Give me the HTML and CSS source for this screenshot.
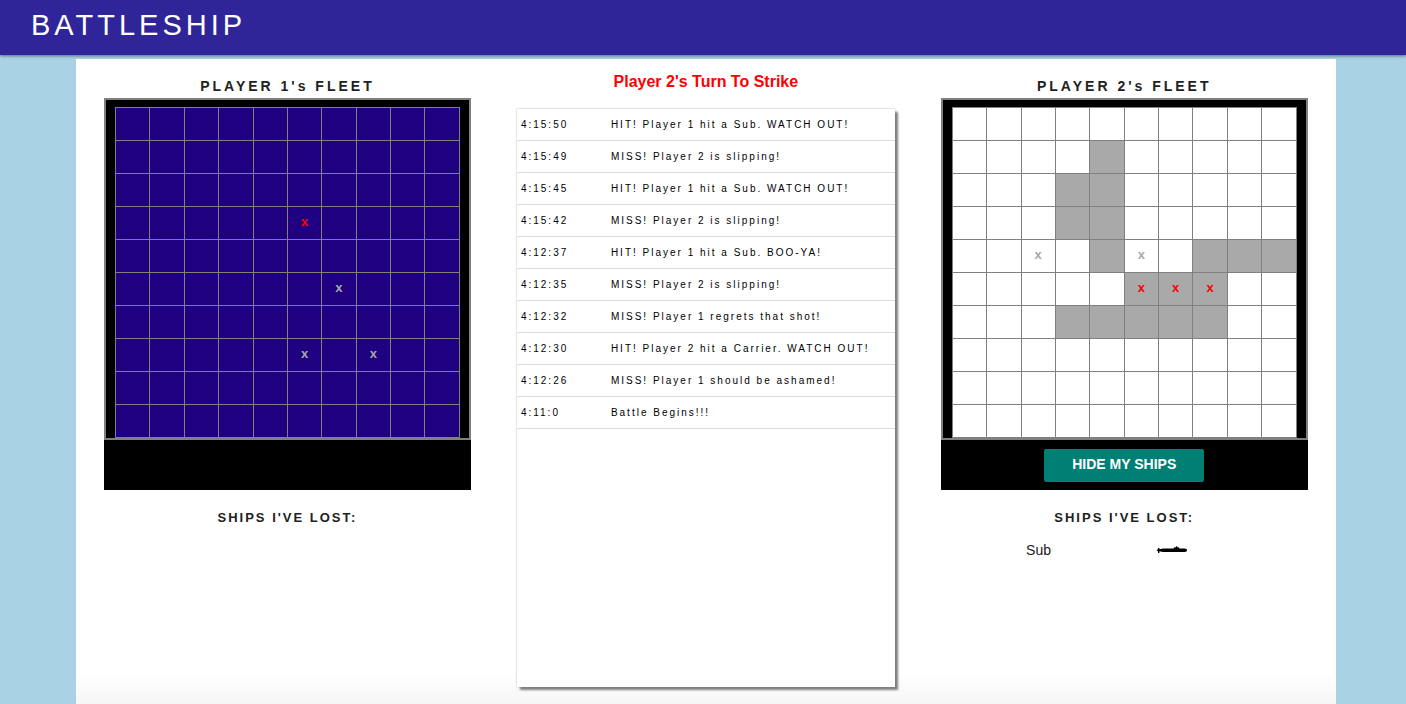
FILE: index.html
```html
<!DOCTYPE html>
<html lang="en">
<head>
<meta charset="utf-8">
<title>Battleship</title>
<link rel="stylesheet" href="styles.css">
</head>
<body>
<header class="nav"><h1 class="logo">BATTLESHIP</h1></header>
<main class="game">
  <section class="player">
    <h2 class="heading">PLAYER 1's FLEET</h2>
    <div class="board">
      <table class="grid hidden-fleet" aria-label="Player 1 board">
        <tr><td></td><td></td><td></td><td></td><td></td><td></td><td></td><td></td><td></td><td></td></tr>
        <tr><td></td><td></td><td></td><td></td><td></td><td></td><td></td><td></td><td></td><td></td></tr>
        <tr><td></td><td></td><td></td><td></td><td></td><td></td><td></td><td></td><td></td><td></td></tr>
        <tr><td></td><td></td><td></td><td></td><td></td><td class="hit">x</td><td></td><td></td><td></td><td></td></tr>
        <tr><td></td><td></td><td></td><td></td><td></td><td></td><td></td><td></td><td></td><td></td></tr>
        <tr><td></td><td></td><td></td><td></td><td></td><td></td><td class="miss">x</td><td></td><td></td><td></td></tr>
        <tr><td></td><td></td><td></td><td></td><td></td><td></td><td></td><td></td><td></td><td></td></tr>
        <tr><td></td><td></td><td></td><td></td><td></td><td class="miss">x</td><td></td><td class="miss">x</td><td></td><td></td></tr>
        <tr><td></td><td></td><td></td><td></td><td></td><td></td><td></td><td></td><td></td><td></td></tr>
        <tr><td></td><td></td><td></td><td></td><td></td><td></td><td></td><td></td><td></td><td></td></tr>
      </table>
    </div>
    <div class="controls"></div>
    <h3 class="heading lost-heading">SHIPS I'VE LOST:</h3>
  </section>

  <section class="center">
    <p class="turn">Player 2's Turn To Strike</p>
    <div class="log">
      <table class="log-table" aria-label="Battle log">
        <tr><td class="time">4:15:50</td><td>HIT! Player 1 hit a Sub. WATCH OUT!</td></tr>
        <tr><td class="time">4:15:49</td><td>MISS! Player 2 is slipping!</td></tr>
        <tr><td class="time">4:15:45</td><td>HIT! Player 1 hit a Sub. WATCH OUT!</td></tr>
        <tr><td class="time">4:15:42</td><td>MISS! Player 2 is slipping!</td></tr>
        <tr><td class="time">4:12:37</td><td>HIT! Player 1 hit a Sub. BOO-YA!</td></tr>
        <tr><td class="time">4:12:35</td><td>MISS! Player 2 is slipping!</td></tr>
        <tr><td class="time">4:12:32</td><td>MISS! Player 1 regrets that shot!</td></tr>
        <tr><td class="time">4:12:30</td><td>HIT! Player 2 hit a Carrier. WATCH OUT!</td></tr>
        <tr><td class="time">4:12:26</td><td>MISS! Player 1 should be ashamed!</td></tr>
        <tr><td class="time">4:11:0</td><td>Battle Begins!!!</td></tr>
      </table>
    </div>
  </section>

  <section class="player">
    <h2 class="heading">PLAYER 2's FLEET</h2>
    <div class="board">
      <table class="grid" aria-label="Player 2 board">
        <tr><td></td><td></td><td></td><td></td><td></td><td></td><td></td><td></td><td></td><td></td></tr>
        <tr><td></td><td></td><td></td><td></td><td class="ship"></td><td></td><td></td><td></td><td></td><td></td></tr>
        <tr><td></td><td></td><td></td><td class="ship"></td><td class="ship"></td><td></td><td></td><td></td><td></td><td></td></tr>
        <tr><td></td><td></td><td></td><td class="ship"></td><td class="ship"></td><td></td><td></td><td></td><td></td><td></td></tr>
        <tr><td></td><td></td><td class="miss">x</td><td></td><td class="ship"></td><td class="miss">x</td><td></td><td class="ship"></td><td class="ship"></td><td class="ship"></td></tr>
        <tr><td></td><td></td><td></td><td></td><td></td><td class="ship hit">x</td><td class="ship hit">x</td><td class="ship hit">x</td><td></td><td></td></tr>
        <tr><td></td><td></td><td></td><td class="ship"></td><td class="ship"></td><td class="ship"></td><td class="ship"></td><td class="ship"></td><td></td><td></td></tr>
        <tr><td></td><td></td><td></td><td></td><td></td><td></td><td></td><td></td><td></td><td></td></tr>
        <tr><td></td><td></td><td></td><td></td><td></td><td></td><td></td><td></td><td></td><td></td></tr>
        <tr><td></td><td></td><td></td><td></td><td></td><td></td><td></td><td></td><td></td><td></td></tr>
      </table>
    </div>
    <div class="controls"><button class="toggle" type="button">HIDE MY SHIPS</button></div>
    <h3 class="heading lost-heading">SHIPS I'VE LOST:</h3>
    <ul class="lost">
      <li class="lost-ship">
        <span>Sub</span>
        <svg class="sub" viewBox="0 0 30 8" role="img" aria-label="Submarine">
          <path d="M0 3.600h1V2h1.400v1.300L6 2.600h10.500L17.500 1.200h1.500V.3h1.200v.9h1.600l.8 1.400h5c1.500.1 2.400.8 2.400 1.700s-.9 1.700-2.400 1.700H6l-3.600-.7V7H1V5H0z"/>
        </svg>
      </li>
    </ul>
  </section>
</main>
</body>
</html>
```

FILE: styles.css
```css
* { box-sizing: border-box; }

body {
  margin: 0;
  min-height: 100vh;
  display: flex;
  flex-direction: column;
  background: #a9d3e4;
  color: #212121;
  font-family: "Liberation Sans", Arial, sans-serif;
  font-size: 14px;
}

.nav {
  height: 55px;
  padding: 0 31px;
  background: #2f2598;
  box-shadow: 0 1px 3px rgba(0, 0, 0, .5);
}

.logo {
  margin: 0;
  font-size: 29px;
  font-weight: 400;
  line-height: 50px;
  letter-spacing: 4px;
  color: #fff;
}

.game {
  flex: 1;
  display: grid;
  grid-template-columns: 367fr 378fr 367fr;
  gap: 46px;
  margin: 4px 5% 0 76px;
  padding: 0 28px 17px;
  background: linear-gradient(to top, #f6f6f6, #fff 32px);
}

.heading {
  margin: 0;
  padding-top: 16px;
  font-size: 14px;
  font-weight: 700;
  line-height: 23px;
  letter-spacing: 3px;
  text-align: center;
}

.lost-heading {
  font-size: 13px;
  letter-spacing: 2px;
}

.board {
  padding: 7px 9px 0;
  border: 2px solid #808080;
  background: #000;
}

.grid {
  width: 100%;
  table-layout: fixed;
  border-collapse: collapse;
  background: #fff;
}

.grid td {
  height: 33px;
  padding: 0 0 2px;
  border: 1px solid #808080;
  font-size: 13px;
  font-weight: 700;
  line-height: 16px;
  text-align: center;
}

.hidden-fleet { background: #1e0081; }
.grid .ship { background: #a9a9a9; }
.grid .hit { color: #f00; }
.grid .miss { color: #a9a9a9; }

.controls {
  display: flex;
  justify-content: center;
  align-items: flex-start;
  height: 50px;
  padding-top: 9px;
  background: #000;
}

.toggle {
  height: 33px;
  padding: 0 28px 3px;
  border: 0;
  border-radius: 2px;
  background: #008075;
  color: #fff;
  font-family: inherit;
  font-size: 14px;
  font-weight: 700;
}

.turn {
  margin: 0;
  padding: 12px 0 16px;
  font-size: 16px;
  font-weight: 700;
  line-height: 22px;
  text-align: center;
  color: #f00;
}

.center {
  display: flex;
  flex-direction: column;
}

.log {
  flex: 1;
  background: #fff;
  box-shadow: 3px 3px 2px #808080, 0 0 2px rgba(0, 0, 0, .3);
}

.log-table {
  width: 100%;
  border-spacing: 0;
  color: #000;
  font-size: 10px;
  letter-spacing: 2px;
}

.log-table td {
  height: 32px;
  padding: 0 0 1px 4px;
  border-bottom: 1px solid #dcdae4;
  white-space: nowrap;
}

.log-table .time { width: 90px; }

.lost {
  margin: 0;
  padding: 11px 0;
  list-style: none;
}

.lost-ship {
  display: grid;
  grid-template-columns: 1fr 1fr;
  align-items: center;
  justify-items: center;
  padding: 0 69px 0 31px;
  line-height: 20px;
}

.sub {
  width: 30px;
  height: 8px;
  fill: #000;
}
```
